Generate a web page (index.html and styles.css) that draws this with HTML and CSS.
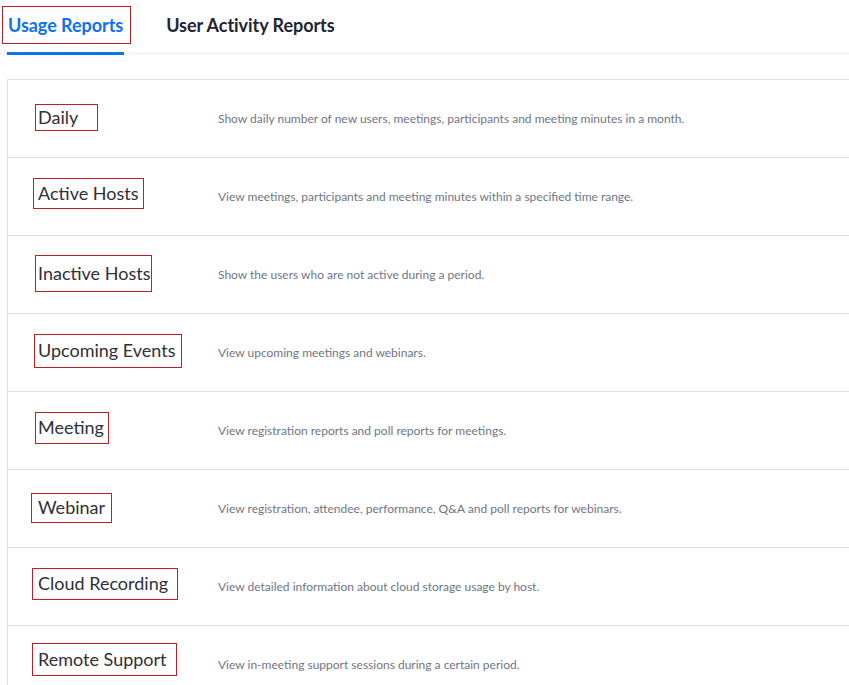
FILE: index.html
```html
<!DOCTYPE html>
<html lang="en">
<head>
<meta charset="utf-8">
<title>Usage Reports</title>
<link rel="stylesheet" href="styles.css">
</head>
<body>
<div class="tabs">
  <div class="tab tab-active"><span class="tab-box">Usage Reports</span></div>
  <div class="tab">User Activity Reports</div>
</div>
<div class="report-list">
  <div class="report-row">
    <div class="report-title"><span class="box box-daily">Daily</span></div>
    <div class="report-desc">Show daily number of new users, meetings, participants and meeting minutes in a month.</div>
  </div>
  <div class="report-row">
    <div class="report-title"><span class="box box-active">Active Hosts</span></div>
    <div class="report-desc">View meetings, participants and meeting minutes within a specified time range.</div>
  </div>
  <div class="report-row">
    <div class="report-title"><span class="box box-inactive">Inactive Hosts</span></div>
    <div class="report-desc">Show the users who are not active during a period.</div>
  </div>
  <div class="report-row">
    <div class="report-title"><span class="box box-upcoming">Upcoming Events</span></div>
    <div class="report-desc">View upcoming meetings and webinars.</div>
  </div>
  <div class="report-row">
    <div class="report-title"><span class="box box-meeting">Meeting</span></div>
    <div class="report-desc">View registration reports and poll reports for meetings.</div>
  </div>
  <div class="report-row">
    <div class="report-title"><span class="box box-webinar">Webinar</span></div>
    <div class="report-desc">View registration, attendee, performance, Q&amp;A and poll reports for webinars.</div>
  </div>
  <div class="report-row">
    <div class="report-title"><span class="box box-cloud">Cloud Recording</span></div>
    <div class="report-desc">View detailed information about cloud storage usage by host.</div>
  </div>
  <div class="report-row">
    <div class="report-title"><span class="box box-remote">Remote Support</span></div>
    <div class="report-desc">View in-meeting support sessions during a certain period.</div>
  </div>
</div>
</body>
</html>
```
FILE: styles.css
```css
html, body {
  margin: 0;
  padding: 0;
  background: #ffffff;
}

body {
  font-family: Lato, "Open Sans", "Liberation Sans", sans-serif;
  color: #232333;
  overflow: hidden;
}

.tabs {
  display: flex;
  gap: 41px;
  padding-left: 7px;
  height: 52px;
  border-bottom: 3px solid #f7f7f8;
}

.tab {
  padding: 14px 1px 0;
  font-size: 18px;
  font-weight: 700;
  line-height: 22px;
  letter-spacing: -0.05px;
  color: #232333;
  margin-bottom: -3px;
  border-bottom: 3px solid transparent;
}

.tab-active {
  color: #0e72ed;
  border-bottom-color: #0e72ed;
}

.tab-box {
  display: inline-block;
  border: 1px solid #c01f26;
  padding: 7px 7px 7px 5px;
  margin: -8px -8px -8px -6px;
}

.report-list {
  margin: 24px 0 0 7px;
  border-top: 1px solid #dfdfe3;
  border-left: 1px solid #dfdfe3;
}

.report-row {
  display: flex;
  align-items: flex-start;
  height: 77px;
  border-bottom: 1px solid #dfdfe3;
}

.report-title {
  flex: none;
  display: flex;
  align-items: flex-start;
  width: 180px;
  padding-left: 30px;
  font-size: 18px;
  line-height: 23px;
  color: #303036;
}

.box {
  display: block;
  box-sizing: border-box;
  border: 1px solid #c01f26;
  white-space: nowrap;
}

.box-daily    { width: 63px;  padding: 1px 0 1px 2px; margin: 24px 0 0 -3px; }
.box-active   { width: 111px; padding: 3px 0 3px 4px; margin: 20px 0 0 -5px; }
.box-inactive { width: 117px; padding: 6px 0 6px 2px; margin: 19px 0 0 -3px; }
.box-upcoming { width: 148px; padding: 4px 0 5px 3px; margin: 20px 0 0 -4px; }
.box-meeting  { width: 74px;  padding: 3px 0 4px 2px; margin: 20px 0 0 -3px; }
.box-webinar  { width: 81px;  padding: 2px 0 3px 6px; margin: 23px 0 0 -7px; }
.box-cloud    { width: 146px; padding: 3px 0 4px 5px; margin: 20px 0 0 -6px; }
.box-remote   { width: 145px; padding: 4px 0 4px 5px; margin: 17px 0 0 -6px; }

.report-desc {
  align-self: center;
  font-size: 12px;
  line-height: 16px;
  color: #6f7585;
  white-space: nowrap;
  margin-top: 1px;
}
```
